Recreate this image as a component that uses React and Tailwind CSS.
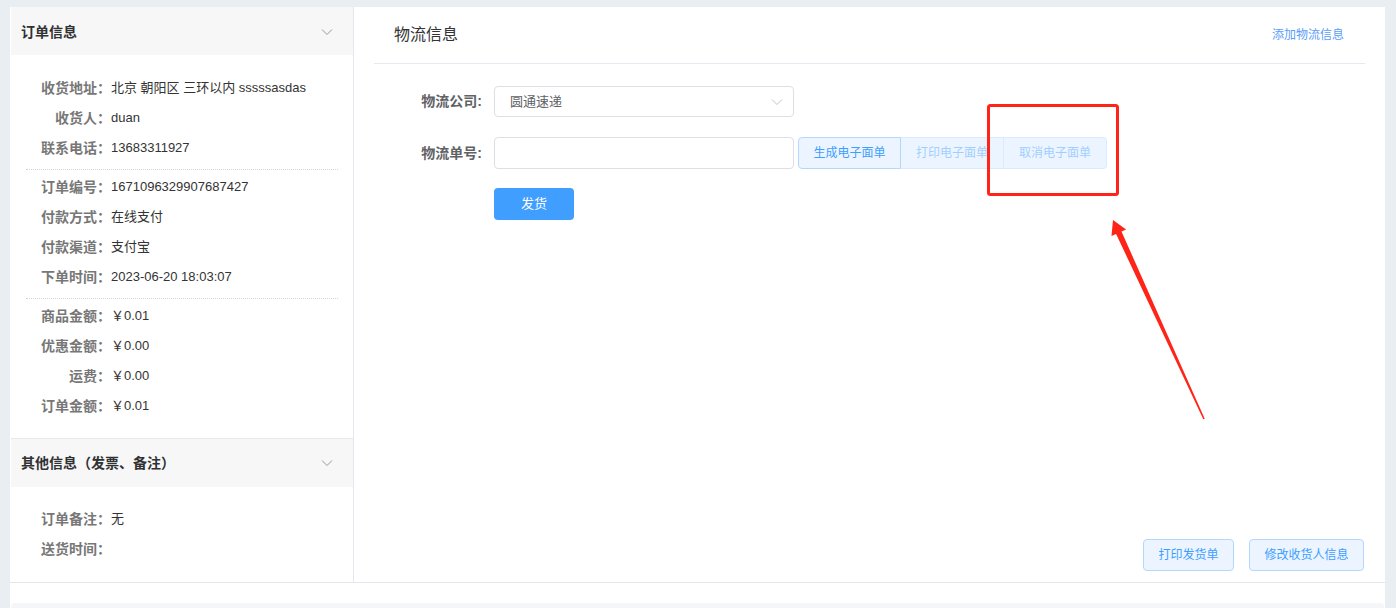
const Chevron = ({ className }) => (
  <svg width="12" height="8" viewBox="0 0 12 8" className={className}>
    <polyline points="1,1.5 6,6.5 11,1.5" fill="none" stroke="currentColor" strokeWidth="1" />
  </svg>
);

const InfoRow = ({ label, value }) => (
  <div className="flex h-[30px] items-center">
    <span className="w-[100px] shrink-0 text-right text-[14px] font-bold text-[#777]">{label}</span>
    <span className="text-[13px] text-[#333]">{value}</span>
  </div>
);

const Divider = () => <div className="mx-[15px] mb-[2px] mt-[6px] border-t border-dotted border-[#d4d4d4]" />;

const App = () => {
  return (
    <div
      className="relative h-[608px] w-full overflow-hidden bg-[#e9eef3] pl-[10px] pr-[11px] pt-[7px]"
      style={{ fontFamily: '"Liberation Sans", "Noto Sans CJK SC", sans-serif' }}
    >
      <div className="flex h-full flex-col bg-white">
        <div className="flex h-[576px] shrink-0 border-b border-[#e4e7ed]">
          {/* left panel */}
          <div className="w-[344px] shrink-0 border-r border-[#e4e7ed] pl-px">
            <div className="flex h-[48px] items-center justify-between bg-[#f7f7f7] pl-[10px] pr-[20px] pt-[2px]">
              <span className="text-[14px] font-bold text-[#303133]">订单信息</span>
              <Chevron className="text-[#999]" />
            </div>
            <div className="pb-[17px] pt-[18px]">
              <InfoRow label="收货地址：" value="北京 朝阳区 三环以内 sssssasdas" />
              <InfoRow label="收货人：" value="duan" />
              <InfoRow label="联系电话：" value="13683311927" />
              <Divider />
              <InfoRow label="订单编号：" value="1671096329907687427" />
              <InfoRow label="付款方式：" value="在线支付" />
              <InfoRow label="付款渠道：" value="支付宝" />
              <InfoRow label="下单时间：" value="2023-06-20 18:03:07" />
              <Divider />
              <InfoRow label="商品金额：" value="￥0.01" />
              <InfoRow label="优惠金额：" value="￥0.00" />
              <InfoRow label="运费：" value="￥0.00" />
              <InfoRow label="订单金额：" value="￥0.01" />
            </div>
            <div className="flex h-[49px] items-center justify-between border-t border-[#e8e8ee] bg-[#f7f7f7] pl-[10px] pr-[20px]">
              <span className="text-[14px] font-bold text-[#303133]">其他信息（发票、备注）</span>
              <Chevron className="text-[#999]" />
            </div>
            <div className="pt-[17px]">
              <InfoRow label="订单备注：" value="无" />
              <InfoRow label="送货时间：" value="" />
            </div>
          </div>

          {/* right panel */}
          <div className="flex flex-1 flex-col px-[20px] pb-[11px]">
            <div className="flex h-[57px] shrink-0 items-center justify-between border-b border-[#e6e9f0] pl-[20px] pr-[21px]">
              <span className="text-[16px] text-[#333]">物流信息</span>
              <span className="text-[12px] text-[#5a9df8]">添加物流信息</span>
            </div>
            <div className="flex flex-col gap-[20px] pt-[22px]">
              <div className="flex items-center">
                <span className="w-[120px] pr-[12px] text-right text-[14px] font-bold text-[#606266]">物流公司:</span>
                <div className="flex h-[31px] w-[300px] items-center justify-between rounded-[4px] border border-[#dcdfe6] pl-[15px] pr-[10px]">
                  <span className="text-[13px] text-[#606266]">圆通速递</span>
                  <Chevron className="text-[#c0c4cc]" />
                </div>
              </div>
              <div className="flex items-center">
                <span className="w-[120px] pr-[12px] text-right text-[14px] font-bold text-[#606266]">物流单号:</span>
                <input className="h-[32px] w-[300px] rounded-[4px] border border-[#dcdfe6] px-[15px] text-[13px] outline-none" />
                <div className="ml-[4px] flex h-[32px]">
                  <button className="w-[103px] rounded-l-[4px] border border-[#b3d8ff] bg-[#ecf5ff] text-[12px] text-[#409eff]">生成电子面单</button>
                  <button className="w-[103px] border border-l-0 border-[#d9ecff] bg-[#ecf5ff] text-[12px] text-[#a0cfff]">打印电子面单</button>
                  <button className="w-[103px] rounded-r-[4px] border border-l-0 border-[#d9ecff] bg-[#ecf5ff] text-[12px] text-[#a0cfff]">取消电子面单</button>
                </div>
              </div>
              <div className="-mt-px flex pl-[120px]">
                <button className="h-[32px] w-[80px] rounded-[4px] bg-[#409eff] text-[13px] text-white">发货</button>
              </div>
            </div>
            <div className="mt-auto flex justify-end gap-[15px] pr-px">
              <button className="h-[32px] w-[91px] rounded-[4px] border border-[#b3d8ff] bg-[#ecf5ff] text-[12px] text-[#409eff]">打印发货单</button>
              <button className="h-[32px] w-[115px] rounded-[4px] border border-[#b3d8ff] bg-[#ecf5ff] text-[12px] text-[#409eff]">修改收货人信息</button>
            </div>
          </div>
        </div>
        <div className="h-[20px] shrink-0" />
        <div className="mx-px flex-1 rounded-t-[4px] bg-[#f4f6f9]" />
      </div>

      {/* annotation overlay */}
      <svg className="pointer-events-none absolute left-0 top-0" width="1396" height="608">
        <rect x="988.5" y="105.5" width="129" height="89" rx="2" fill="none" stroke="#ff2418" strokeWidth="3" />
        <polygon
          points="1113,220 1126.1,229.4 1121.5,231.5 1204.7,418.7 1203.3,419.3 1116.1,233.9 1111.5,236"
          fill="#ff2418"
        />
      </svg>
    </div>
  );
};

export default App;
